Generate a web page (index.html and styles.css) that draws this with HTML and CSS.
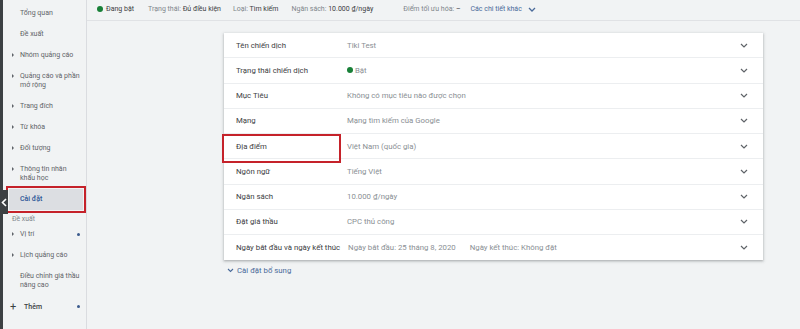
FILE: index.html
```html
<!DOCTYPE html>
<html lang="vi">
<head>
<meta charset="utf-8">
<link rel="stylesheet" href="styles.css">
</head>
<body>
<div class="rail">
  <div class="rail-tab">
    <svg width="6" height="9" viewBox="0 0 6 9"><path d="M5 1 L1.5 4.5 L5 8" fill="none" stroke="#fff" stroke-width="1.6"/></svg>
  </div>
</div>
<nav class="sidebar">
  <div class="item">Tổng quan</div>
  <div class="item">Đề xuất</div>
  <div class="item tri">Nhóm quảng cáo</div>
  <div class="item tri">Quảng cáo và phần<br>mở rộng</div>
  <div class="item tri">Trang đích</div>
  <div class="item tri">Từ khóa</div>
  <div class="item tri">Đối tượng</div>
  <div class="item tri">Thông tin nhân<br>khẩu học</div>
  <div class="item active">Cài đặt</div>
  <div class="subhead">Đề xuất</div>
  <div class="item tri dot">Vị trí</div>
  <div class="item tri">Lịch quảng cáo</div>
  <div class="item">Điều chỉnh giá thầu<br>nâng cao</div>
  <div class="item more dot"><span class="plus">+</span>Thêm</div>
</nav>
<main class="main">
  <header class="topbar">
    <span class="status"><span class="gdot"></span>Đang bật</span>
    <span class="tb t1">Trạng thái: <b>Đủ điều kiện</b></span>
    <span class="tb t2">Loại: <b>Tìm kiếm</b></span>
    <span class="tb t3">Ngân sách: <b>10.000 ₫/ngày</b></span>
    <span class="tb t4">Điểm tối ưu hóa: <b>–</b></span>
    <span class="tb link">Các chi tiết khác
      <svg class="chev-link" width="8" height="5" viewBox="0 0 8 5"><path d="M1 1 L4 4 L7 1" fill="none" stroke="#4a6a9a" stroke-width="1.3"/></svg>
    </span>
  </header>
  <section class="content">
    <div class="card">
      <div class="row"><span class="label">Tên chiến dịch</span><span class="value">Tiki Test</span><svg class="chev" width="8" height="5" viewBox="0 0 8 5"><path d="M1 1 L4 4 L7 1" fill="none" stroke="#5f6368" stroke-width="1.2"/></svg></div>
      <div class="row"><span class="label">Trạng thái chiến dịch</span><span class="value"><span class="gdot small"></span>Bật</span><svg class="chev" width="8" height="5" viewBox="0 0 8 5"><path d="M1 1 L4 4 L7 1" fill="none" stroke="#5f6368" stroke-width="1.2"/></svg></div>
      <div class="row"><span class="label">Mục Tiêu</span><span class="value">Không có mục tiêu nào được chọn</span><svg class="chev" width="8" height="5" viewBox="0 0 8 5"><path d="M1 1 L4 4 L7 1" fill="none" stroke="#5f6368" stroke-width="1.2"/></svg></div>
      <div class="row"><span class="label">Mạng</span><span class="value">Mạng tìm kiếm của Google</span><svg class="chev" width="8" height="5" viewBox="0 0 8 5"><path d="M1 1 L4 4 L7 1" fill="none" stroke="#5f6368" stroke-width="1.2"/></svg></div>
      <div class="row"><span class="label marked">Địa điểm</span><span class="value">Việt Nam (quốc gia)</span><svg class="chev" width="8" height="5" viewBox="0 0 8 5"><path d="M1 1 L4 4 L7 1" fill="none" stroke="#5f6368" stroke-width="1.2"/></svg></div>
      <div class="row"><span class="label">Ngôn ngữ</span><span class="value">Tiếng Việt</span><svg class="chev" width="8" height="5" viewBox="0 0 8 5"><path d="M1 1 L4 4 L7 1" fill="none" stroke="#5f6368" stroke-width="1.2"/></svg></div>
      <div class="row"><span class="label">Ngân sách</span><span class="value">10.000 ₫/ngày</span><svg class="chev" width="8" height="5" viewBox="0 0 8 5"><path d="M1 1 L4 4 L7 1" fill="none" stroke="#5f6368" stroke-width="1.2"/></svg></div>
      <div class="row"><span class="label">Đặt giá thầu</span><span class="value">CPC thủ công</span><svg class="chev" width="8" height="5" viewBox="0 0 8 5"><path d="M1 1 L4 4 L7 1" fill="none" stroke="#5f6368" stroke-width="1.2"/></svg></div>
      <div class="row"><span class="label">Ngày bắt đầu và ngày kết thúc</span><span class="value">Ngày bắt đầu: 25 tháng 8, 2020<span class="end">Ngày kết thúc: Không đặt</span></span><svg class="chev" width="8" height="5" viewBox="0 0 8 5"><path d="M1 1 L4 4 L7 1" fill="none" stroke="#5f6368" stroke-width="1.2"/></svg></div>
    </div>
    <div class="extra">
      <svg width="7" height="5" viewBox="0 0 7 5"><path d="M1 1 L3.5 3.5 L6 1" fill="none" stroke="#4a6a9a" stroke-width="1.1"/></svg>
      <span>Cài đặt bổ sung</span>
    </div>
  </section>
</main>
</body>
</html>
```

FILE: styles.css
```css
* { box-sizing: border-box; }
html, body { margin: 0; padding: 0; }
body {
  width: 800px;
  height: 329px;
  overflow: hidden;
  display: flex;
  background: #f1f3f4;
  font-family: Roboto, "Noto Sans", "Liberation Sans", sans-serif;
  font-size: 7.8px;
  color: #3c4043;
}
.rail {
  width: 3px;
  flex-shrink: 0;
  background: #3c4043;
  position: relative;
}
.rail-tab {
  position: absolute;
  left: 0;
  top: 190px;
  width: 8px;
  height: 24px;
  background: #3c4043;
  display: flex;
  align-items: center;
  justify-content: center;
  z-index: 2;
}
.sidebar {
  width: 84px;
  flex-shrink: 0;
  background: #f1f3f4;
  border-right: 1px solid #dadce0;
  padding-top: 2.5px;
  color: #5f6368;
  font-size: 7px;
  white-space: nowrap;
}
.item {
  position: relative;
  padding: 6px 2px 6px 17px;
  line-height: 9px;
}
.item.tri::before {
  content: "";
  position: absolute;
  left: 9px;
  top: 8.5px;
  border-left: 2.5px solid #5f6368;
  border-top: 2px solid transparent;
  border-bottom: 2px solid transparent;
}
.item.dot::after {
  content: "";
  position: absolute;
  right: 6px;
  top: 9px;
  width: 3px;
  height: 3px;
  border-radius: 50%;
  background: #3b5a8c;
}
.item.active {
  margin: 0 3px 0 6px;
  padding-left: 11px;
  background: #dcdee2;
  color: #2b5597;
  font-weight: 500;
  outline: 2px solid #c5222a;
  outline-offset: 1px;
}
.subhead {
  height: 14px;
  line-height: 18px;
  padding-left: 9px;
  font-size: 6.8px;
  color: #80868b;
}
.item.more {
  padding-left: 7px;
  color: #3c4043;
  font-weight: 500;
}
.plus {
  display: inline-block;
  width: 14px;
  font-size: 11px;
  font-weight: 400;
  vertical-align: -1px;
}
.main {
  flex: 1;
  display: flex;
  flex-direction: column;
}
.topbar {
  height: 21px;
  border-bottom: 1px solid #e0e2e5;
  display: flex;
  align-items: center;
  padding-left: 10px;
  padding-bottom: 2px;
  color: #80868b;
  white-space: nowrap;
  font-size: 7px;
}
.topbar b { font-weight: 400; color: #3c4043; }
.status { display: flex; align-items: center; color: #3c4043; }
.gdot {
  display: inline-block;
  width: 6px;
  height: 6px;
  border-radius: 50%;
  background: #188038;
  margin-right: 3px;
}
.gdot.small { width: 6px; height: 6px; margin-right: 2px; vertical-align: -0.5px; }
.t1 { margin-left: 14px; }
.t2 { margin-left: 12px; }
.t3 { margin-left: 13px; }
.t4 { margin-left: 30px; }
.link { margin-left: 10px; color: #4a6a9a; display: flex; align-items: center; }
.chev-link { margin-left: 6px; }
.content {
  padding: 12px 0 0 137px;
}
.card {
  width: 539px;
  background: #fff;
  box-shadow: 0 1px 2px rgba(60,64,67,.3), 0 1px 3px 1px rgba(60,64,67,.12);
}
.row {
  position: relative;
  height: 25.25px;
  display: flex;
  align-items: center;
  padding: 0 15px 0 12px;
  border-bottom: 1px solid #eceef0;
  white-space: nowrap;
}
.row:last-child { border-bottom: none; }
.label {
  min-width: 103px;
  margin-right: 8px;
  color: #3c4043;
}
.label.marked::after {
  content: "";
  position: absolute;
  left: -2px;
  top: 0;
  width: 115px;
  height: 25px;
  border: 2px solid #c5222a;
}
.value {
  flex: 1;
  color: #8a8f94;
}
.end { margin-left: 14px; }
.chev { flex-shrink: 0; }
.extra {
  margin-top: 6px;
  margin-left: 3px;
  display: flex;
  align-items: center;
  color: #4a6a9a;
}
.extra svg { margin-right: 3px; }
```
